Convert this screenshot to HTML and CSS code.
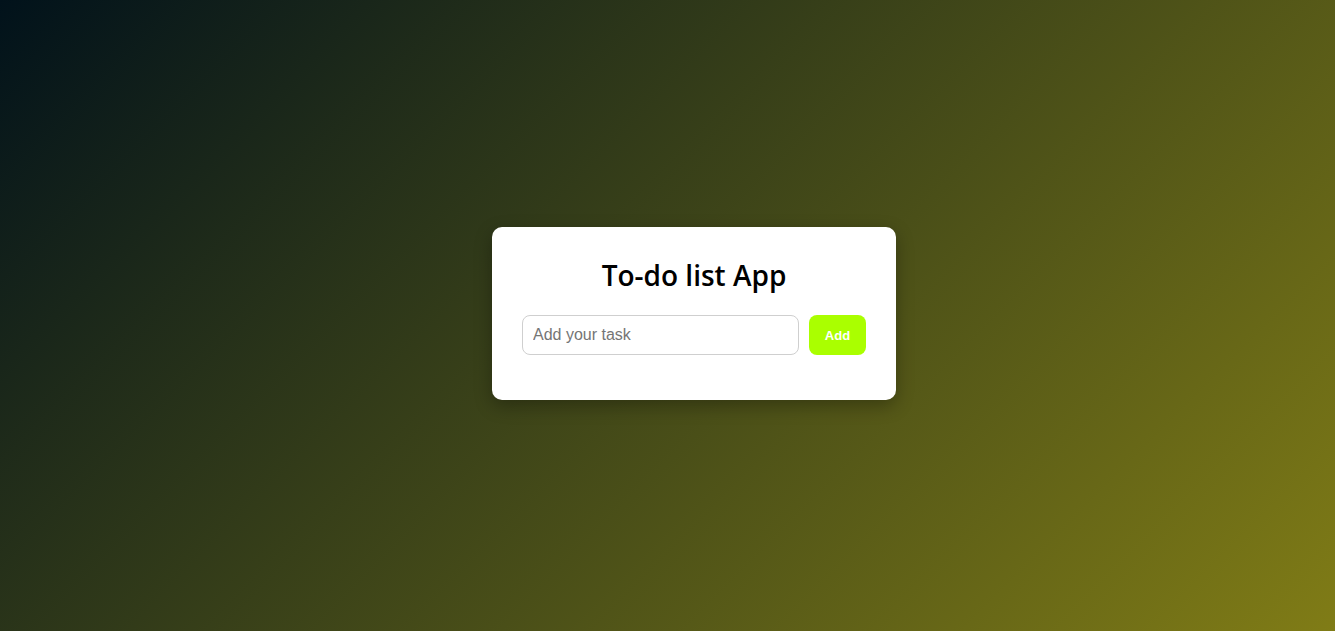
FILE: index.html
```html
<!DOCTYPE html>
<html lang="en">
<head>
<meta charset="UTF-8">
<title>To-do list App</title>
<link rel="stylesheet" href="styles.css">
</head>
<body>
<div class="container">
  <div class="todo-app">
    <h2 class="title">To-do list App</h2>
    <div class="row">
      <input class="task-input" type="text" placeholder="Add your task">
      <button class="add-btn">Add</button>
    </div>
  </div>
</div>
</body>
</html>
```

FILE: styles.css
```css
* { box-sizing: border-box; }
html, body { margin: 0; padding: 0; }
body {
  font-family: "Liberation Sans", Arial, sans-serif;
  background: linear-gradient(135deg, #01121b, #807c16);
  min-height: 100vh;
}
.container {
  width: 100%;
  min-height: 100vh;
  display: flex;
  align-items: center;
  justify-content: center;
  padding: 0 0 4px 53px;
}
.todo-app {
  width: 404px;
  background: #fff;
  border-radius: 10px;
  padding: 29px 30px 45px;
  box-shadow: 0 6px 18px rgba(0, 0, 0, 0.3);
}
.title {
  margin: 0 0 21px;
  font-family: "Open Sans", sans-serif;
  font-weight: 600;
  font-size: 28px;
  line-height: 38px;
  color: #000;
  text-align: center;
}
.row {
  display: flex;
  gap: 10px;
}
.task-input {
  width: 277px;
  height: 40px;
  border: 1px solid #cfcfcf;
  border-radius: 8px;
  padding: 0 10px;
  font-family: "Liberation Sans", Arial, sans-serif;
  font-size: 16px;
  outline: none;
}
.task-input::placeholder { color: #757575; }
.add-btn {
  width: 57px;
  height: 40px;
  border: none;
  border-radius: 8px;
  background: #aaff00;
  color: #fff;
  font-family: "Liberation Sans", Arial, sans-serif;
  font-weight: bold;
  font-size: 13px;
  cursor: pointer;
}
```
